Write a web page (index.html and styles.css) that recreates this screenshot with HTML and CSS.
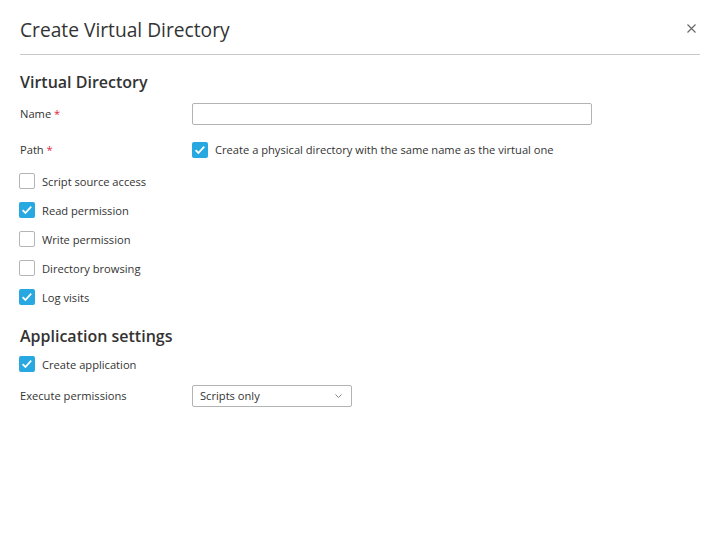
FILE: index.html
```html
<!DOCTYPE html>
<html>
<head>
<meta charset="utf-8">
<link rel="stylesheet" href="styles.css">
</head>
<body>
<div class="dialog">
  <div class="header">
    <h1 class="title">Create Virtual Directory</h1>
    <span class="close">
      <svg width="9" height="9" viewBox="0 0 9 9"><path d="M0.5 0.5L8.5 8.5M8.5 0.5L0.5 8.5" stroke="#666" stroke-width="1.1" fill="none"/></svg>
    </span>
  </div>
  <div class="body">
    <h2 class="section">Virtual Directory</h2>
    <div class="row field">
      <label class="label">Name <span class="req">*</span></label>
      <input class="input" type="text">
    </div>
    <div class="row field path">
      <label class="label">Path <span class="req">*</span></label>
      <label class="check"><span class="box on"><svg width="16" height="16" viewBox="0 0 16 16"><path d="M3.6 8.2L6.4 11L12.2 4.6" stroke="#fff" stroke-width="1.8" fill="none"/></svg></span>Create a physical directory with the same name as the virtual one</label>
    </div>
    <label class="check row"><span class="box"></span>Script source access</label>
    <label class="check row"><span class="box on"><svg width="16" height="16" viewBox="0 0 16 16"><path d="M3.6 8.2L6.4 11L12.2 4.6" stroke="#fff" stroke-width="1.8" fill="none"/></svg></span>Read permission</label>
    <label class="check row"><span class="box"></span>Write permission</label>
    <label class="check row"><span class="box"></span>Directory browsing</label>
    <label class="check row"><span class="box on"><svg width="16" height="16" viewBox="0 0 16 16"><path d="M3.6 8.2L6.4 11L12.2 4.6" stroke="#fff" stroke-width="1.8" fill="none"/></svg></span>Log visits</label>

    <h2 class="section app">Application settings</h2>
    <label class="check row"><span class="box on"><svg width="16" height="16" viewBox="0 0 16 16"><path d="M3.6 8.2L6.4 11L12.2 4.6" stroke="#fff" stroke-width="1.8" fill="none"/></svg></span>Create application</label>
    <div class="row field exec">
      <label class="label">Execute permissions</label>
      <div class="select">Scripts only
        <svg class="chev" width="7" height="4" viewBox="0 0 7 4"><path d="M0.5 0.5L3.5 3.5L6.5 0.5" stroke="#777" stroke-width="0.9" fill="none"/></svg>
      </div>
    </div>
  </div>
</div>
</body>
</html>
```
FILE: styles.css
```css
* { box-sizing: border-box; }
html, body { margin: 0; padding: 0; background: #fff; }
body {
  font-family: "Open Sans", "Noto Sans", sans-serif;
  color: #333;
  width: 714px;
  height: 556px;
  overflow: hidden;
}
.dialog { padding: 0 14px 0 20px; }
.header {
  display: flex;
  align-items: center;
  justify-content: space-between;
  height: 55px;
  border-bottom: 1px solid #c8c8c8;
}
.title {
  margin: 0;
  font-size: 19.2px;
  font-weight: 400;
  color: #333;
  line-height: 26px;
  padding-top: 5px;
}
.close { display: flex; margin-right: 4px; margin-top: 2px; }
.body { padding-top: 16px; }
.section {
  margin: 0;
  font-size: 16px;
  font-weight: 600;
  line-height: 22px;
  color: #333;
}
.row { display: flex; align-items: center; font-size: 11.15px; }
.field { height: 21px; }
.label { width: 172px; flex: none; color: #333; }
.req { color: #e0263f; }
.input {
  width: 400px;
  height: 22px;
  border: 1px solid #b3b3b3;
  border-radius: 2px;
  margin: 0;
  padding: 0 6px;
  font: inherit;
}
.body > .field:first-of-type { margin-top: 10px; }
.path { margin-top: 15px; }
.check {
  display: flex;
  align-items: center;
  font-size: 11.15px;
  color: #333;
  height: 16px;
}
.body > .check { margin-top: 13px; margin-left: -1px; }
.box {
  width: 16px;
  height: 16px;
  border: 1px solid #b5b5b5;
  border-radius: 2px;
  margin-right: 7px;
  flex: none;
  background: #fff;
}
.box.on { background: #27a8e0; border: none; }
.box svg { display: block; }
.section.app { margin-top: 20px; }
.body > .section.app + .check { margin-top: 9px; }
.exec { margin-top: 13px; }
.select {
  width: 160px;
  height: 22px;
  border: 1px solid #b3b3b3;
  border-radius: 2px;
  display: flex;
  align-items: center;
  justify-content: space-between;
  padding: 0 9px 0 7px;
  font-size: 11.15px;
}
.chev { display: block; }
```
